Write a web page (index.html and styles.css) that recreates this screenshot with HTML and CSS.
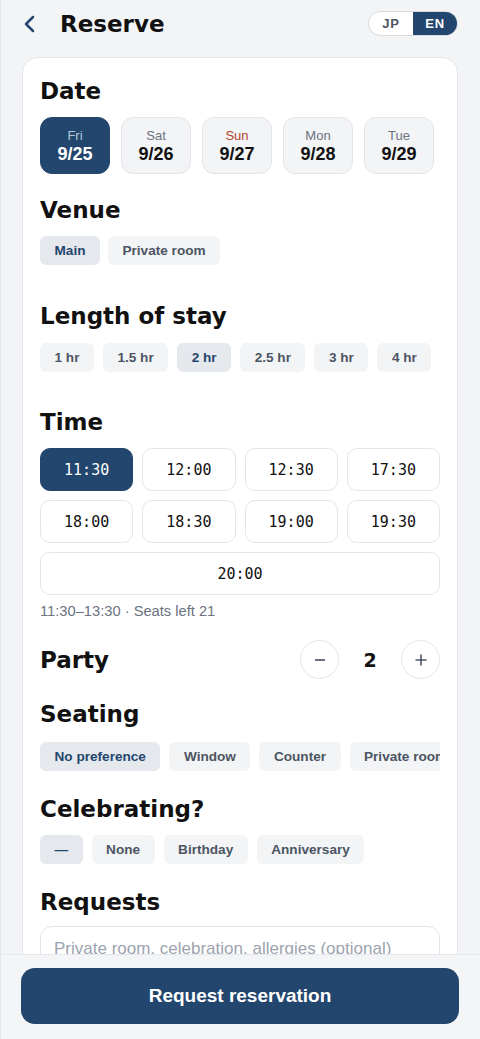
FILE: index.html
```html
<!DOCTYPE html>
<html lang="en">
<head>
<meta charset="utf-8">
<meta name="viewport" content="width=device-width, initial-scale=1">
<title>Reserve</title>
<link rel="stylesheet" href="styles.css">
</head>
<body>
<div class="app">
  <header class="topbar">
    <button class="back" aria-label="Back">
      <svg width="24" height="24" viewBox="0 0 24 24"><path d="M16 5 L9 12 L16 19" fill="none" stroke="#23466e" stroke-width="2.5" stroke-linecap="round" stroke-linejoin="round"/></svg>
    </button>
    <h1 class="title">Reserve</h1>
    <div class="lang">
      <span class="lang-seg">JP</span>
      <span class="lang-seg active">EN</span>
    </div>
  </header>

  <main class="card">
    <h2 class="heading">Date</h2>
    <div class="dates">
      <button class="date selected"><span class="dow">Fri</span><span class="dnum">9/25</span></button>
      <button class="date"><span class="dow">Sat</span><span class="dnum">9/26</span></button>
      <button class="date"><span class="dow sun">Sun</span><span class="dnum">9/27</span></button>
      <button class="date"><span class="dow">Mon</span><span class="dnum">9/28</span></button>
      <button class="date"><span class="dow">Tue</span><span class="dnum">9/29</span></button>
    </div>

    <h2 class="heading h-venue">Venue</h2>
    <div class="chips chips-venue">
      <span class="chip on">Main</span>
      <span class="chip">Private room</span>
    </div>

    <h2 class="heading h-length">Length of stay</h2>
    <div class="chips chips-length">
      <span class="chip">1 hr</span>
      <span class="chip">1.5 hr</span>
      <span class="chip on">2 hr</span>
      <span class="chip">2.5 hr</span>
      <span class="chip">3 hr</span>
      <span class="chip">4 hr</span>
    </div>

    <h2 class="heading h-time">Time</h2>
    <div class="times">
      <button class="time selected">11:30</button>
      <button class="time">12:00</button>
      <button class="time">12:30</button>
      <button class="time">17:30</button>
      <button class="time">18:00</button>
      <button class="time">18:30</button>
      <button class="time">19:00</button>
      <button class="time">19:30</button>
      <button class="time wide">20:00</button>
    </div>
    <p class="note">11:30–13:30 · Seats left 21</p>

    <div class="party">
      <h2 class="heading">Party</h2>
      <div class="stepper">
        <button class="step" aria-label="Decrease">
          <svg width="12" height="12" viewBox="0 0 12 12"><path d="M1 6 H11" stroke="#4b5563" stroke-width="1.7"/></svg>
        </button>
        <span class="count">2</span>
        <button class="step" aria-label="Increase">
          <svg width="12" height="12" viewBox="0 0 12 12"><path d="M0.5 6 H11.5 M6 0.5 V11.5" stroke="#4b5563" stroke-width="1.6"/></svg>
        </button>
      </div>
    </div>

    <h2 class="heading h-seating">Seating</h2>
    <div class="chips chips-seating">
      <span class="chip on">No preference</span>
      <span class="chip">Window</span>
      <span class="chip">Counter</span>
      <span class="chip">Private room</span>
    </div>

    <h2 class="heading h-celebrate">Celebrating?</h2>
    <div class="chips chips-celebrate">
      <span class="chip on">—</span>
      <span class="chip">None</span>
      <span class="chip">Birthday</span>
      <span class="chip">Anniversary</span>
    </div>

    <h2 class="heading h-requests">Requests</h2>
    <textarea class="requests" placeholder="Private room, celebration, allergies (optional)"></textarea>
  </main>

  <footer class="bottombar">
    <button class="submit">Request reservation</button>
  </footer>
</div>
</body>
</html>
```
FILE: styles.css
```css
* { box-sizing: border-box; }

html, body {
  margin: 0;
  padding: 0;
  background: #f3f4f6;
}

body {
  font-family: "Liberation Sans", Arial, sans-serif;
  color: #111827;
}

button {
  font: inherit;
  cursor: pointer;
}

.app {
  min-height: 100vh;
  border-left: 1px solid #e2e5e9;
  padding-bottom: 100px;
}

.topbar {
  height: 47px;
  display: flex;
  align-items: center;
  padding: 0 22px 0 16px;
}

.back {
  width: 24px;
  height: 24px;
  padding: 0;
  border: 0;
  background: transparent;
  display: flex;
}

.title {
  margin: 0 0 0 19px;
  font-family: "DejaVu Sans", sans-serif;
  font-weight: 700;
  font-size: 23px;
  line-height: 28px;
  color: #111;
  flex: 1;
}

.lang {
  display: flex;
  height: 25px;
  border: 1px solid #d6d9de;
  border-radius: 999px;
  overflow: hidden;
  background: #fff;
}

.lang-seg {
  width: 44px;
  display: flex;
  align-items: center;
  justify-content: center;
  font-family: "Liberation Sans", Arial, sans-serif;
  font-weight: 700;
  font-size: 13px;
  letter-spacing: 0.8px;
  color: #4b5563;
}

.lang-seg.active {
  background: #23466e;
  color: #fff;
}

.card {
  margin: 10px 22px 0 21px;
  background: #fff;
  border: 1px solid #e5e7eb;
  border-radius: 16px;
  padding: 19px 17px 40px;
}

.heading {
  margin: 0;
  font-family: "DejaVu Sans", sans-serif;
  font-weight: 700;
  font-size: 23px;
  line-height: 28px;
  color: #111;
}

.dates {
  margin-top: 12px;
  display: flex;
  gap: 11px;
}

.date {
  width: 70px;
  height: 57px;
  padding: 0;
  border: 1px solid #e3e5e9;
  border-radius: 12px;
  background: #f3f4f6;
  display: flex;
  flex-direction: column;
  align-items: center;
  justify-content: center;
}

.dow {
  font-size: 13px;
  line-height: 16px;
  color: #6b7280;
}

.dow.sun { color: #b4462e; }

.dnum {
  font-size: 18px;
  line-height: 20px;
  font-weight: 700;
  color: #111;
}

.date.selected {
  background: #23466e;
  border-color: #23466e;
}

.date.selected .dow { color: #b7c6d8; }
.date.selected .dnum { color: #fff; }

.h-venue { margin-top: 22px; }
.h-length { margin-top: 37px; }
.h-time { margin-top: 36px; }
.h-seating { margin-top: 21px; }
.h-celebrate { margin-top: 24px; }
.h-requests { margin-top: 24px; }

.chips {
  display: flex;
  gap: 8px;
  margin-top: 12px;
}

.chips-length { margin-top: 13px; gap: 9px; }
.chips-seating { margin-top: 14px; gap: 9px; overflow: hidden; white-space: nowrap; }
.chips-celebrate { gap: 9px; }

.chip {
  flex: none;
  height: 29px;
  padding: 0 14.5px;
  display: inline-flex;
  align-items: center;
  border-radius: 6px;
  background: #f3f4f6;
  font-size: 13.6px;
  font-weight: 700;
  color: #4b5563;
  white-space: nowrap;
}

.chip.on {
  background: #e5e8ec;
  color: #23466e;
}

.times {
  margin-top: 12px;
  display: grid;
  grid-template-columns: repeat(4, 1fr);
  gap: 9px;
}

.time {
  height: 43px;
  padding: 0;
  background: #fff;
  border: 1px solid #e3e5e9;
  border-radius: 10px;
  font-family: "DejaVu Sans Mono", monospace;
  font-size: 15px;
  color: #111;
}

.time.selected {
  background: #23466e;
  border-color: #23466e;
  color: #fff;
}

.time.wide { grid-column: 1 / -1; }

.note {
  margin: 6px 0 0;
  font-size: 14.7px;
  line-height: 20px;
  color: #6b7280;
}

.party {
  margin-top: 19px;
  display: flex;
  align-items: center;
  justify-content: space-between;
  height: 39px;
}

.stepper {
  display: flex;
  align-items: center;
  gap: 11px;
}

.step {
  width: 39px;
  height: 39px;
  padding: 0;
  border: 1px solid #e3e5e9;
  border-radius: 50%;
  background: #fff;
  display: flex;
  align-items: center;
  justify-content: center;
}

.count {
  width: 40px;
  text-align: center;
  font-family: "DejaVu Sans", sans-serif;
  font-weight: 700;
  font-size: 19px;
  color: #111;
}

.requests {
  display: block;
  width: 100%;
  height: 90px;
  margin-top: 10px;
  padding: 11px 13px;
  border: 1px solid #e3e5e9;
  border-radius: 12px;
  resize: none;
  font-family: "Liberation Sans", Arial, sans-serif;
  font-size: 17px;
  line-height: 22px;
}

.requests::placeholder { color: #9ca3af; }

.bottombar {
  position: fixed;
  left: 0;
  right: 0;
  bottom: 0;
  height: 85px;
  padding: 13px 21px 0 20px;
  background: #f4f5f7;
  border-top: 1px solid #e5e7eb;
  border-left: 1px solid #e2e5e9;
}

.submit {
  width: 100%;
  height: 56px;
  border: 0;
  border-radius: 14px;
  background: #23466e;
  color: #fff;
  font-family: "Liberation Sans", Arial, sans-serif;
  font-weight: 700;
  font-size: 19px;
}
```
